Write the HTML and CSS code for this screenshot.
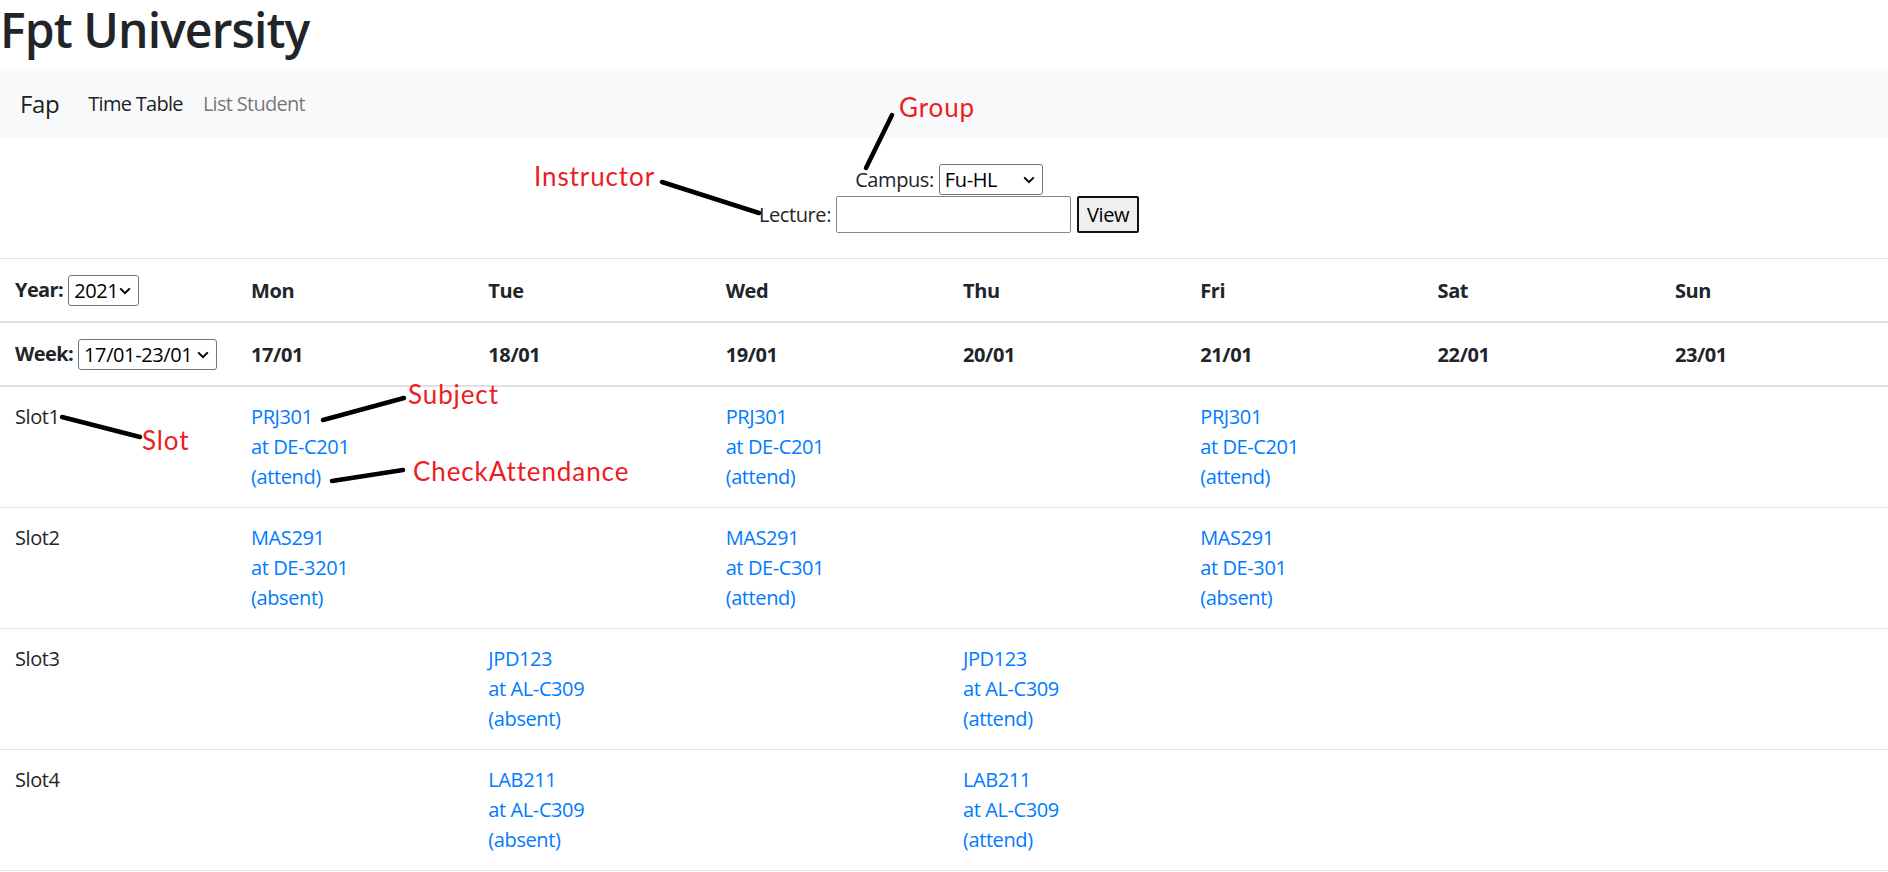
FILE: index.html
```html
<!DOCTYPE html>
<html lang="en">
<head>
<meta charset="utf-8">
<title>Fpt University</title>
<link rel="stylesheet" href="styles.css">
</head>
<body>
<h1 class="title">Fpt University</h1>
<nav class="navbar">
  <a class="brand" href="#">Fap</a>
  <ul class="nav">
    <li><a class="nav-link active" href="#">Time Table</a></li>
    <li><a class="nav-link" href="#">List Student</a></li>
  </ul>
</nav>
<form class="filter">
  <div class="filter-row filter-row-campus">
    <label class="filter-label">Campus:</label>
    <span class="select select-campus"><select class="select-input"><option>Fu-HL</option></select><svg class="chev" viewBox="0 0 12 8"><path d="M1.2 1.4 L6 6.2 L10.8 1.4"/></svg></span>
  </div>
  <div class="filter-row filter-row-lecture">
    <label class="filter-label">Lecture:</label>
    <input class="text-input" type="text">
    <button class="btn-view" type="button">View</button>
  </div>
</form>
<table class="timetable">
  <colgroup>
    <col class="col-first"><col class="col-day"><col class="col-day"><col class="col-day"><col class="col-day"><col class="col-day"><col class="col-day"><col class="col-last">
  </colgroup>
  <thead>
    <tr class="hdr hdr-year">
      <th><div class="hdr-ctl"><span class="hdr-label">Year:</span><span class="select select-year"><select class="select-input"><option>2021</option></select><svg class="chev" viewBox="0 0 12 8"><path d="M1.2 1.4 L6 6.2 L10.8 1.4"/></svg></span></div></th>
      <th>Mon</th><th>Tue</th><th>Wed</th><th>Thu</th><th>Fri</th><th>Sat</th><th>Sun</th>
    </tr>
    <tr class="hdr hdr-week">
      <th><div class="hdr-ctl"><span class="hdr-label">Week:</span><span class="select select-week"><select class="select-input"><option>17/01-23/01</option></select><svg class="chev" viewBox="0 0 12 8"><path d="M1.2 1.4 L6 6.2 L10.8 1.4"/></svg></span></div></th>
      <th>17/01</th><th>18/01</th><th>19/01</th><th>20/01</th><th>21/01</th><th>22/01</th><th>23/01</th>
    </tr>
  </thead>
  <tbody>
    <tr class="slot">
      <td>Slot1</td>
      <td><a class="session" href="#"><span>PRJ301</span><span>at DE-C201</span><span>(attend)</span></a></td>
      <td></td>
      <td><a class="session" href="#"><span>PRJ301</span><span>at DE-C201</span><span>(attend)</span></a></td>
      <td></td>
      <td><a class="session" href="#"><span>PRJ301</span><span>at DE-C201</span><span>(attend)</span></a></td>
      <td></td><td></td>
    </tr>
    <tr class="slot">
      <td>Slot2</td>
      <td><a class="session" href="#"><span>MAS291</span><span>at DE-3201</span><span>(absent)</span></a></td>
      <td></td>
      <td><a class="session" href="#"><span>MAS291</span><span>at DE-C301</span><span>(attend)</span></a></td>
      <td></td>
      <td><a class="session" href="#"><span>MAS291</span><span>at DE-301</span><span>(absent)</span></a></td>
      <td></td><td></td>
    </tr>
    <tr class="slot">
      <td>Slot3</td>
      <td></td>
      <td><a class="session" href="#"><span>JPD123</span><span>at AL-C309</span><span>(absent)</span></a></td>
      <td></td>
      <td><a class="session" href="#"><span>JPD123</span><span>at AL-C309</span><span>(attend)</span></a></td>
      <td></td><td></td><td></td>
    </tr>
    <tr class="slot">
      <td>Slot4</td>
      <td></td>
      <td><a class="session" href="#"><span>LAB211</span><span>at AL-C309</span><span>(absent)</span></a></td>
      <td></td>
      <td><a class="session" href="#"><span>LAB211</span><span>at AL-C309</span><span>(attend)</span></a></td>
      <td></td><td></td><td></td>
    </tr>
  </tbody>
</table>

<div class="annot">
  <svg class="annot-lines" width="1888" height="872" viewBox="0 0 1888 872">
    <line x1="892" y1="115" x2="866" y2="168"/>
    <line x1="662" y1="182" x2="759" y2="213"/>
    <line x1="62" y1="417" x2="140" y2="437"/>
    <line x1="323" y1="420" x2="404" y2="398"/>
    <line x1="332" y1="481" x2="403" y2="470"/>
  </svg>
  <span class="annot-label annot-group">Group</span>
  <span class="annot-label annot-instructor">Instructor</span>
  <span class="annot-label annot-slot">Slot</span>
  <span class="annot-label annot-subject">Subject</span>
  <span class="annot-label annot-check">CheckAttendance</span>
</div>
</body>
</html>
```
FILE: styles.css
```css
html, body {
  margin: 0;
  padding: 0;
  overflow: hidden;
}
body {
  position: relative;
  width: 1888px;
  height: 872px;
  font-family: "Open Sans", "Noto Sans", sans-serif;
  font-size: 20px;
  line-height: 30px;
  letter-spacing: -0.4px;
  color: #212529;
  background: #fff;
}
.title {
  margin: 0 0 10px;
  height: 59px;
  font-size: 48px;
  line-height: 59px;
  font-weight: 600;
  letter-spacing: -0.9px;
  color: #212529;
}
.navbar {
  display: flex;
  align-items: center;
  height: 69px;
  padding: 0 20px;
  background: #f8f9fa;
  box-sizing: border-box;
}
.brand {
  font-size: 24px;
  line-height: 36px;
  color: rgba(0, 0, 0, .9);
  text-decoration: none;
  margin-right: 19px;
}
.nav {
  display: flex;
  list-style: none;
  margin: 0;
  padding: 0;
}
.nav-link {
  display: block;
  padding: 0 10px;
  letter-spacing: -0.7px;
  color: rgba(0, 0, 0, .55);
  text-decoration: none;
}
.nav-link.active {
  color: rgba(0, 0, 0, .9);
}

/* filter form */
.filter {
  display: flex;
  flex-direction: column;
  align-items: center;
  padding: 26px 0 25px 10px;
  margin: 0;
}
.filter-row {
  display: flex;
  align-items: center;
  gap: 5px;
}
.filter-row-campus {
  height: 31px;
  margin-bottom: 1px;
}
.filter-row-lecture {
  height: 37px;
}
.filter-label {
  color: #212529;
}
.select {
  position: relative;
  display: inline-block;
}
.select-input {
  -webkit-appearance: none;
  appearance: none;
  display: block;
  box-sizing: border-box;
  height: 31px;
  margin: 0;
  padding: 0 0 0 5px;
  border: 1px solid #767676;
  border-radius: 3px;
  background: #fff;
  font-family: "Open Sans", "Noto Sans", sans-serif;
  font-size: 20px;
  letter-spacing: -0.4px;
  color: #000;
  line-height: 29px;
}
.select-campus .select-input { width: 104px; }
.select-year .select-input { width: 71px; }
.select-week .select-input { width: 139px; }
.chev {
  position: absolute;
  right: 8px;
  top: 12px;
  width: 12px;
  height: 8px;
  pointer-events: none;
  fill: none;
  stroke: #000;
  stroke-width: 2;
}
.text-input {
  box-sizing: border-box;
  width: 235px;
  height: 37px;
  margin: 0;
  padding: 0 4px;
  border: 1px solid #858585;
  border-radius: 2px;
  font-family: "Open Sans", "Noto Sans", sans-serif;
  font-size: 20px;
}
.btn-view {
  box-sizing: border-box;
  width: 62px;
  height: 37px;
  margin: 0 0 0 1px;
  padding: 0;
  border: 2px solid #111;
  border-radius: 2px;
  background: #efefef;
  font-family: "Open Sans", "Noto Sans", sans-serif;
  font-size: 20px;
  letter-spacing: -0.4px;
  color: #000;
}

/* timetable */
.timetable {
  width: 1888px;
  table-layout: fixed;
  border-collapse: separate;
  border-spacing: 0;
}
.col-first { width: 236px; }
.col-day { width: 237.3px; }
.col-last { width: 228px; }
.timetable th,
.timetable td {
  padding: 15px;
  text-align: left;
  vertical-align: top;
}
.hdr th {
  vertical-align: bottom;
  font-weight: 700;
  border-bottom: 2px solid #dee2e6;
}
.hdr-year th {
  border-top: 1px solid #dee2e6;
}
.hdr-ctl {
  display: flex;
  align-items: center;
  gap: 5px;
  height: 32px;
}
.hdr-label {
  font-weight: 700;
  letter-spacing: -0.6px;
}
.slot td {
  height: 90px;
  border-bottom: 1px solid #dee2e6;
}
.session {
  display: block;
  color: #007bff;
  text-decoration: none;
}
.session span {
  display: block;
}

/* annotations drawn over the screenshot */
.annot {
  position: absolute;
  left: 0;
  top: 0;
  width: 1888px;
  height: 872px;
  pointer-events: none;
}
.annot-lines {
  position: absolute;
  left: 0;
  top: 0;
}
.annot-lines line {
  stroke: #000;
  stroke-width: 4.5;
  stroke-linecap: round;
}
.annot-label {
  position: absolute;
  font-family: Lato, "Open Sans", sans-serif;
  font-size: 26px;
  line-height: 26px;
  letter-spacing: 0.9px;
  color: #ed1c24;
  white-space: nowrap;
}
.annot-group { left: 899px; top: 94px; }
.annot-instructor { left: 534px; top: 163px; }
.annot-slot { left: 142px; top: 427px; }
.annot-subject { left: 408px; top: 381px; }
.annot-check { left: 413px; top: 458px; }
```
